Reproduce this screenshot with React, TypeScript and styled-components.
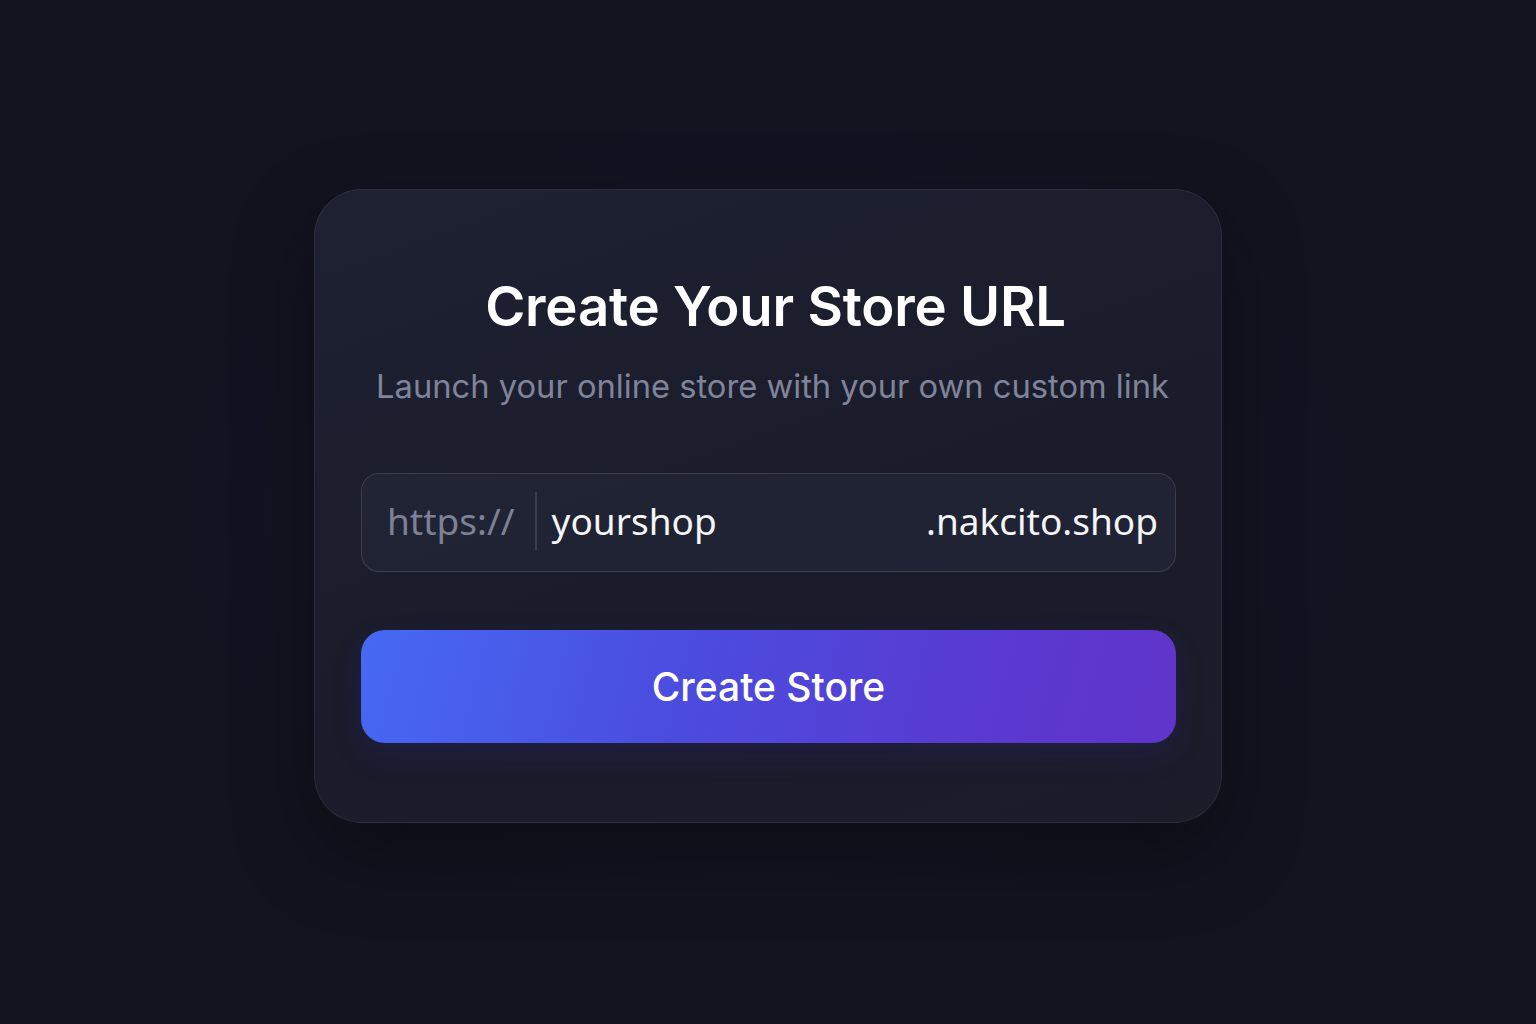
import React from "react";
import styled, { createGlobalStyle } from "styled-components";

const GlobalStyle = createGlobalStyle`
  html, body {
    margin: 0;
    padding: 0;
    background: #11131f;
  }
  body {
    font-family: Inter, "Noto Sans", sans-serif;
  }
`;

const Page = styled.div`
  width: 100vw;
  height: 100vh;
  display: flex;
  align-items: flex-start;
  justify-content: center;
  padding-top: 189px;
  box-sizing: border-box;
  background: radial-gradient(ellipse at 50% 50%, #141726 0%, #11131f 60%);
`;

const Card = styled.div`
  width: 908px;
  height: 634px;
  box-sizing: border-box;
  padding: 76px 45px 0 46px;
  border-radius: 48px;
  border: 1.5px solid rgba(255, 255, 255, 0.07);
  background: linear-gradient(160deg, #1e2132 0%, #1a1c2b 55%, #1c1c29 100%);
  box-shadow: 0 30px 80px rgba(0, 0, 0, 0.35);
  display: flex;
  flex-direction: column;
  align-items: stretch;
`;

const Title = styled.h1`
  margin: 0;
  padding-left: 14px;
  text-align: center;
  font-family: Inter, sans-serif;
  font-weight: 600;
  font-size: 54.5px;
  line-height: 80px;
  letter-spacing: -0.2px;
  color: #ffffff;
`;

const Subtitle = styled.p`
  margin: 0;
  margin-top: 17px;
  padding-left: 8px;
  text-align: center;
  font-family: Inter, sans-serif;
  font-weight: 400;
  font-size: 32.7px;
  line-height: 46px;
  color: #80849a;
`;

const UrlField = styled.div`
  margin-top: 64px;
  height: 99px;
  box-sizing: border-box;
  display: flex;
  align-items: center;
  padding: 0 17px 4px 25px;
  border-radius: 18px;
  border: 1.5px solid rgba(255, 255, 255, 0.12);
  background: rgba(40, 44, 62, 0.45);
  font-family: "Noto Sans", "Open Sans", sans-serif;
  font-size: 37px;
`;

const Prefix = styled.span`
  color: #7d8195;
  padding-right: 20px;
  border-right: 2px solid rgba(255, 255, 255, 0.12);
  line-height: 58px;
`;

const Slug = styled.span`
  flex: 1;
  color: #f4f5f8;
  padding-left: 15px;
`;

const Domain = styled.span`
  color: #f4f5f8;
`;

const CreateButton = styled.button`
  margin-top: 58px;
  height: 113px;
  border: none;
  border-radius: 24px;
  cursor: pointer;
  background: linear-gradient(105deg, #4669f4 0%, #4b4cde 40%, #5b38cf 80%, #6034cb 100%);
  box-shadow: 0 12px 30px rgba(60, 50, 200, 0.15);
  color: #ffffff;
  font-family: Inter, sans-serif;
  font-weight: 500;
  font-size: 39px;
`;

export default function App() {
  return (
    <>
      <GlobalStyle />
      <Page>
        <Card>
          <Title>Create Your Store URL</Title>
          <Subtitle>Launch your online store with your own custom link</Subtitle>
          <UrlField>
            <Prefix>https://</Prefix>
            <Slug>yourshop</Slug>
            <Domain>.nakcito.shop</Domain>
          </UrlField>
          <CreateButton>Create Store</CreateButton>
        </Card>
      </Page>
    </>
  );
}
